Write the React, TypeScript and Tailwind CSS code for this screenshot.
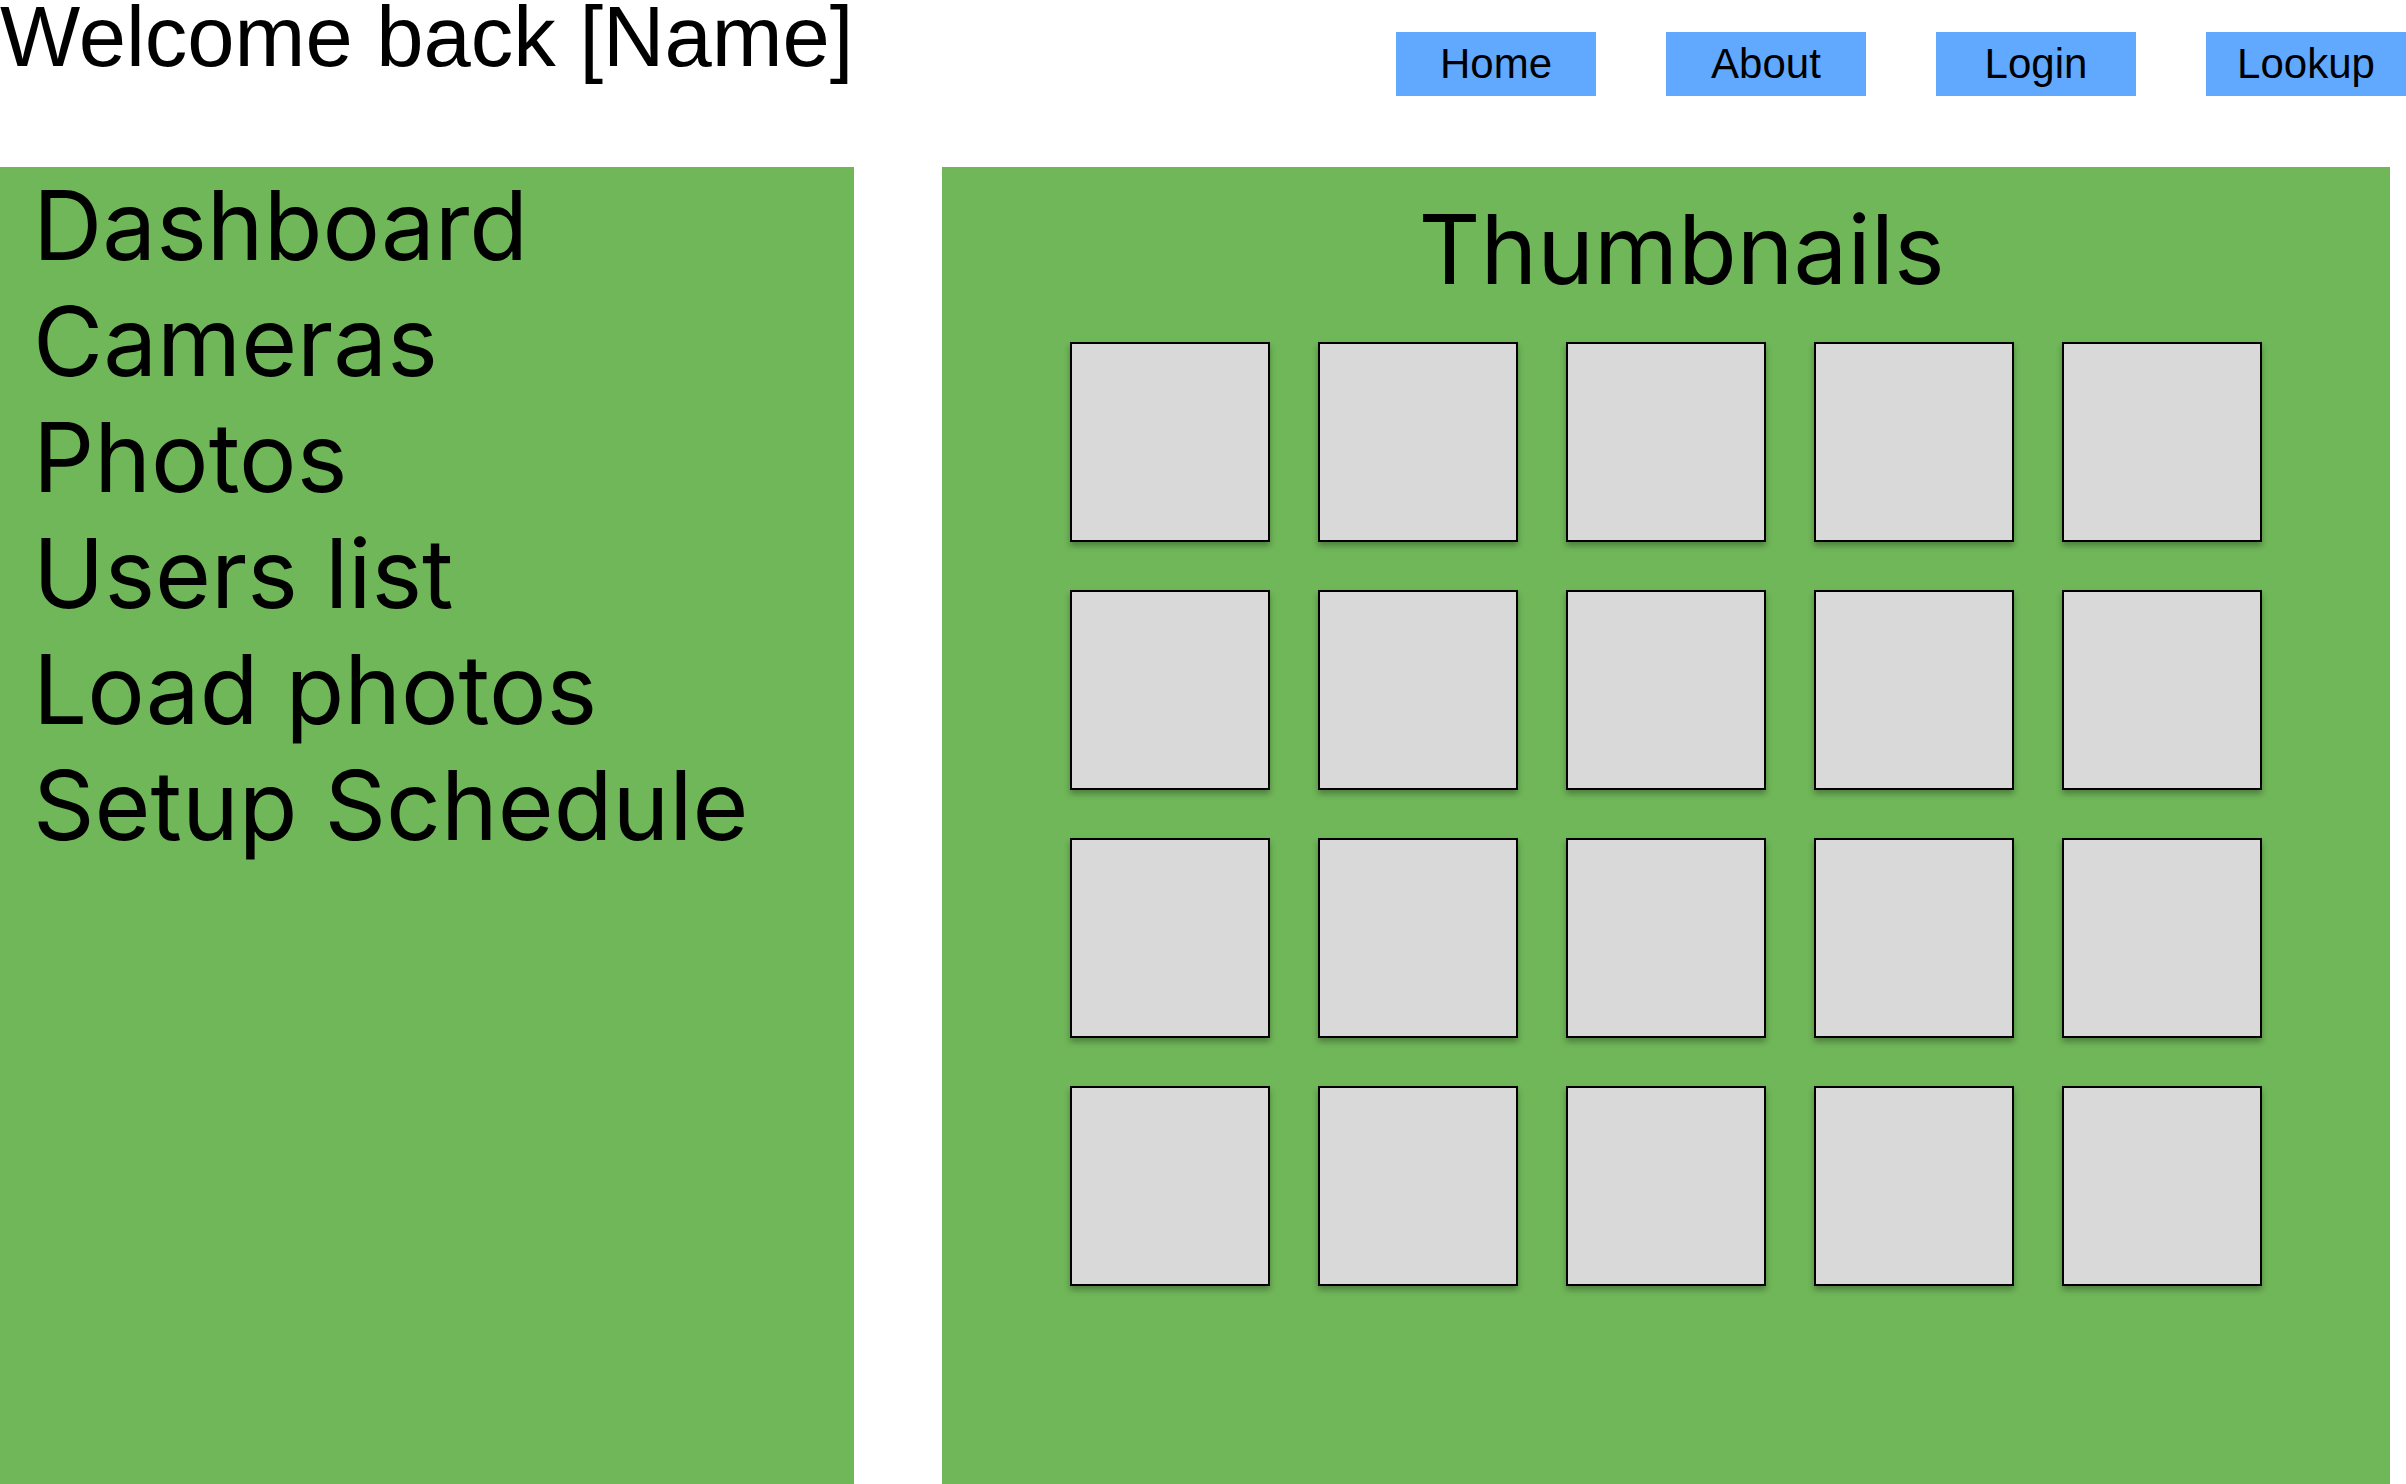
import React from "react";

const navItems = ["Home", "About", "Login", "Lookup"];
const menuItems = ["Dashboard", "Cameras", "Photos", "Users list", "Load photos", "Setup Schedule"];

export default function App() {
  const thumbs = Array.from({ length: 20 }, (_, i) => i);
  return (
    <div className="w-[2406px] h-[1484px] overflow-hidden bg-white text-black">
      <header className="flex h-[167px] items-start">
        <h1 className="font-['Liberation_Sans',Arial,sans-serif] text-[85px] leading-[73px] font-normal whitespace-nowrap">
          Welcome back [Name]
        </h1>
        <nav className="ml-auto mt-[32px] flex gap-[70px]">
          {navItems.map((item) => (
            <button
              key={item}
              className="flex h-[64px] w-[200px] items-center justify-center bg-[#61a9ff] font-['Liberation_Sans',Arial,sans-serif] text-[42px] leading-none text-black"
            >
              {item}
            </button>
          ))}
        </nav>
      </header>
      <main className="flex h-[1317px] gap-[88px] font-['Inter','Noto_Sans',sans-serif]">
        <aside className="w-[854px] shrink-0 bg-[#70b759] pl-[33px]">
          <ul className="text-[96px] leading-[116px]">
            {menuItems.map((item) => (
              <li key={item} className="whitespace-nowrap">
                {item}
              </li>
            ))}
          </ul>
        </aside>
        <section className="flex w-[1448px] shrink-0 flex-col items-center bg-[#70b759] pt-[24px]">
          <h2 className="pl-[31px] text-[96px] leading-[116px] font-normal">Thumbnails</h2>
          <div className="mt-[35px] grid grid-cols-5 gap-[48px]">
            {thumbs.map((t) => (
              <div
                key={t}
                className="h-[200px] w-[200px] border-2 border-black bg-[#d9d9d9] shadow-[0_4px_6px_rgba(0,0,0,0.3)]"
              />
            ))}
          </div>
        </section>
      </main>
    </div>
  );
}
